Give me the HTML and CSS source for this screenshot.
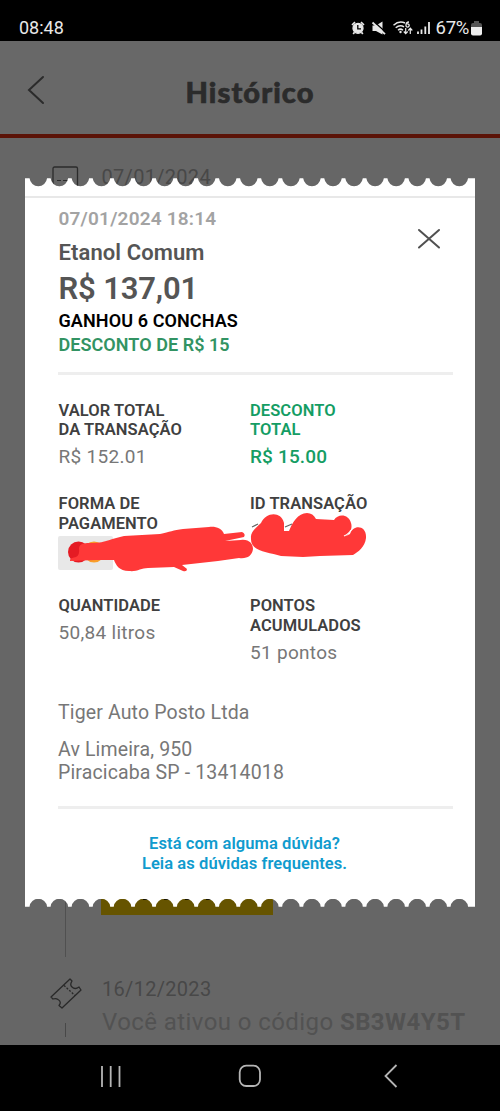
FILE: index.html
```html
<!DOCTYPE html>
<html lang="pt-BR">
<head>
<meta charset="utf-8">
<title>Histórico</title>
<link rel="stylesheet" href="styles.css">
</head>
<body>
<div class="phone">
  <header class="status">
    <span class="clock">08:48</span>
    <svg class="status-icons" width="82" height="18" viewBox="0 0 82 18" fill="none" stroke="#e8e8e8" stroke-width="1.3">
      <circle cx="7" cy="9.3" r="5" fill="#e8e8e8"/><path d="M1 6L4 3.2M10 3.2L13 6M3.5 13.2L2.2 15M10.5 13.2L11.8 15" stroke-width="1.7"/><path d="M6.8 6V9.8H10" stroke="#000"/>
      <path d="M21.5 6.500H25L31.500 2.500V15.500L25 12H21.5Z" fill="#e8e8e8" stroke="none"/><path d="M22.500 2.300L35.500 14" stroke="#000" stroke-width="1.400"/><path d="M21.500 3.5L34 15.200" stroke-width="1.800"/>
      <path d="M42.5 6.2Q48 1.3 54 4M44.7 8.8Q48.8 5.2 53 7.8M47 11.2Q49.5 9 52 11.2" stroke-width="1.5"/><circle cx="49.5" cy="13" r="1.2" fill="#e8e8e8" stroke="none"/>
      <path d="M58 3Q55 3 55 6.3A1.6 1.6 0 1 0 56 5"/><path d="M54.7 9V14.5M52.8 12.5L54.7 14.7L56.7 12.5M59.3 15V9.5M57.3 11.5L59.3 9.2L61.3 11.5" stroke-width="1.2"/>
      <path d="M67 12.5V15M70.5 10.5V15M74.3 7.5V15M78 3V15" stroke-width="1.8"/>
    </svg>
    <span class="percent">67%</span>
    <svg class="battery" width="11" height="15" viewBox="0 0 11 15"><path d="M3 0H8V2H9Q11 2 11 4V6H0V4Q0 2 2 2H3Z" fill="#555"/><path d="M0 6H11V12.5Q11 14.5 9 14.5H2Q0 14.5 0 12.5Z" fill="#eee"/></svg>
  </header>
  <div class="app-bar">
    <svg class="back" width="18" height="30" viewBox="0 0 18 30" fill="none" stroke="#2b2b2b" stroke-width="2" stroke-linecap="round"><path d="M16 2L2 15L16 28"/></svg>
    <h1>Histórico</h1>
  </div>
  <main class="timeline">
    <div class="entry first">
      <svg class="entry-icon" width="27" height="22" viewBox="0 0 27 22" fill="none" stroke="#2b2b2b" stroke-width="1.3"><rect x="1" y="1" width="24.5" height="20" rx="1.5"/><path d="M5 14.500H9M11 14.500H16" stroke-width="1.200"/></svg>
      <span class="entry-date">07/01/2024</span>
    </div>
    <div class="gold"><i></i><i></i><i></i><i></i></div>
    <div class="stem"></div>
    <div class="entry last">
      <svg class="entry-icon" width="32" height="32" viewBox="0 0 32 32" fill="none" stroke="#292929" stroke-width="1.3" stroke-linejoin="round"><path d="M1 19L20 1L22 3Q19.500 7 22 9Q25 12 29 9L31 12L12 30L9 27.500Q12 24 8 21.500Q6 20 3 21Z"/><path d="M14 7.500L25 17.500" stroke-dasharray="2 1.5"/></svg>
      <div>
        <div class="entry-date">16/12/2023</div>
        <div class="entry-text">Você ativou o código <b>SB3W4Y5T</b></div>
      </div>
    </div>
    <div class="stem-end"></div>
  </main>
  <nav class="nav-bar">
    <svg width="22" height="23" viewBox="0 0 22 23" stroke="#b5b5b5" stroke-width="1.8"><path d="M2 1V22M10.700 1V22M19.500 1V22"/></svg>
    <svg class="home" width="24" height="24" viewBox="0 0 24 24" fill="none" stroke="#b5b5b5" stroke-width="1.800"><rect x="1.700" y="1.700" width="20.300" height="20.300" rx="6.500"/></svg>
    <svg width="14" height="24" viewBox="0 0 14 24" fill="none" stroke="#b5b5b5" stroke-width="1.800"><path d="M12.500 1L1.500 12L12.500 23"/></svg>
  </nav>

  <section class="receipt">
    <svg class="edge" width="450" height="9" viewBox="0 0 450 9"><path id="scallop" fill="#fff" d="M0 9V.3H4.550a8.800 8.800 0 0 0 17.500 0h3.550a8.800 8.800 0 0 0 17.500 0h3.550a8.800 8.800 0 0 0 17.500 0h3.550a8.800 8.800 0 0 0 17.500 0h3.550a8.800 8.800 0 0 0 17.500 0h3.550a8.800 8.800 0 0 0 17.500 0h3.550a8.800 8.800 0 0 0 17.500 0h3.550a8.800 8.800 0 0 0 17.500 0h3.550a8.800 8.800 0 0 0 17.500 0h3.550a8.800 8.800 0 0 0 17.500 0h3.550a8.800 8.800 0 0 0 17.500 0h3.550a8.800 8.800 0 0 0 17.500 0h3.550a8.800 8.800 0 0 0 17.500 0h3.550a8.800 8.800 0 0 0 17.500 0h3.550a8.800 8.800 0 0 0 17.500 0h3.550a8.800 8.800 0 0 0 17.500 0h3.550a8.800 8.800 0 0 0 17.500 0h3.550a8.800 8.800 0 0 0 17.500 0h3.550a8.800 8.800 0 0 0 17.500 0h3.550a8.800 8.800 0 0 0 17.500 0h3.550a8.800 8.800 0 0 0 17.500 0H450V9Z"/></svg>
    <div class="receipt-body">
      <div class="top-rule"></div>
      <div class="summary">
        <div class="summary-text">
          <p class="when">07/01/2024 18:14</p>
          <p class="fuel">Etanol Comum</p>
          <p class="price">R$ 137,01</p>
          <p class="earned">GANHOU 6 CONCHAS</p>
          <p class="discount">DESCONTO DE R$ 15</p>
        </div>
        <svg class="close" width="24" height="22" viewBox="0 0 24 22" stroke="#505050" stroke-width="2" stroke-linecap="round"><path d="M2 2L22 19.500M22 2L2 19.500"/></svg>
      </div>
      <div class="details">
        <div class="cell"><h2>VALOR TOTAL<br>DA TRANSAÇÃO</h2><p>R$ 152.01</p></div>
        <div class="cell green"><h2>DESCONTO<br>TOTAL</h2><p>R$ 15.00</p></div>
        <div class="cell"><h2>FORMA DE<br>PAGAMENTO</h2><div class="card-logo"></div></div>
        <div class="cell"><h2>ID TRANSAÇÃO</h2></div>
        <div class="cell"><h2>QUANTIDADE</h2><p>50,84 litros</p></div>
        <div class="cell"><h2>PONTOS<br>ACUMULADOS</h2><p>51 pontos</p></div>
      </div>
      <div class="station">
        <p class="name">Tiger Auto Posto Ltda</p>
        <p class="street">Av Limeira, 950</p>
        <p class="city">Piracicaba SP - 13414018</p>
      </div>
      <div class="faq"><span class="faq-ask">Está com alguma dúvida?</span><br><span class="faq-link">Leia as dúvidas frequentes.</span></div>
    </div>
    <svg class="edge flip" width="450" height="9" viewBox="0 0 450 9"><use href="#scallop"/></svg>
    <svg class="scribble" width="330" height="70" viewBox="50 510 330 70">
      <circle cx="78.500" cy="552" r="10.500" fill="#e51b24"/><circle cx="94" cy="552" r="10.500" fill="#f99e2a"/>
      <path d="M252 527L258 524M285 527L292 524" stroke="#666" stroke-width="1.300"/>
      <path fill="#ff3838" d="M79 548C80 542 88 543 93 543C105 543 113 538 124 536L160 534C170 532 173 530 183 529L209 527C215 526 222 528 224 534L242 532Q246 534 244 537L225 541L241 540C249 539 253 544 253 549C252 556 247 559 239 558L218 561L182 565L187 569Q187 572 183 571L174 567L148 568C141 568 137 572 129 571C119 571 116 565 114 560L96 560L70 561Q69 558 76 557Q80 555 79 548Z"/>
      <path fill="#ff3838" d="M251 538C250 532 257 527 261 523C266 512 281 511 284 523L284 531L289 531C292 523 298 513 307 513Q313 513 316 519L334 520C338 513 349 514 351 523C353 529 349 535 344 537L350 534C353 524 367 525 366 538C365 547 358 552 353 555L320 556L303 557L281 556C268 552 250 552 251 538Z"/>
      <path d="M344 536Q349 534 351 530" fill="none" stroke="#fff" stroke-width="1.200"/>
    </svg>
  </section>
</div>
</body>
</html>
```
FILE: styles.css
```css
* { box-sizing: border-box; }
body { margin: 0; font-family: Roboto, sans-serif; background: #666; }
h1, h2, p { margin: 0; }
svg { display: block; flex: none; }
.phone { position: relative; width: 500px; height: 1111px; display: flex; flex-direction: column; overflow: hidden; background: #666; }

.status { height: 41px; flex: none; display: flex; align-items: center; padding: 15px 18px 0 19px; background: #000; color: #e8e8e8; font-size: 18px; }
.clock { margin-right: auto; line-height: 28px; }
.percent { margin: 0 2px 0 3px; font-size: 18.5px; letter-spacing: -.3px; }

.app-bar { height: 97px; flex: none; display: flex; align-items: center; padding-left: 27px; background: #686868; border-bottom: 4px solid #5b1307; margin-bottom: 1px; }
.app-bar h1 { margin: 7px 0 0 140.5px; font: 900 29px Lato, sans-serif; color: #2b2b2b; letter-spacing: 1.1px; -webkit-text-stroke: .7px #2b2b2b; }
.back { margin-top: 4px; }

.timeline { flex: 1; display: flex; flex-direction: column; }
.entry { display: flex; font-size: 20px; color: #484848; }
.entry-date { line-height: 24px; letter-spacing: .3px; }
.first { padding: 26px 0 0 52px; gap: 22.5px; height: 60px; }
.first .entry-icon { margin-top: 1px; }
.gold { width: 172px; height: 25px; margin: 691px 0 0 101px; padding: 8px 0 0 42px; display: flex; gap: 16px; background: #665400; flex: none; }
.gold i { width: 5px; height: 2px; background: #171300; }
.stem { width: 1px; height: 58px; margin: -16px 0 0 65px; background: #505050; flex: none; }
.last { padding: 20px 0 0 50px; gap: 20px; }
.last .entry-icon { margin-top: 1px; }
.entry-text { margin-top: 7px; font-size: 24px; line-height: 29px; letter-spacing: .42px; white-space: nowrap; color: #525252; }
.stem-end { width: 1px; height: 14px; margin: -14px 0 0 65px; background: #484848; }

.nav-bar { height: 66px; flex: none; display: flex; justify-content: space-between; align-items: center; padding: 0 102px 4px 99.5px; background: #000; }
.home { margin-right: 5px; }

.receipt { position: absolute; left: 25px; top: 178px; width: 450px; height: 729px; display: flex; flex-direction: column; }
.edge { height: 9px; }
.flip { transform: scaleY(-1); }
.receipt-body { flex: 1; background: #fff; padding-top: 9px; margin: -.5px 0; }
.top-rule { height: 2px; background: #e8e8e8; }
.summary { display: flex; justify-content: space-between; margin: 0 22px 0 33px; height: 177.5px; border-bottom: 3px solid #eee; padding-top: 8px; }
.summary-text { padding-left: .5px; }
.close { margin: 22px 12px 0 0; }
.summary p { white-space: nowrap; }
.when { font-weight: 600; font-size: 19px; line-height: 26px; color: #a3a3a3; letter-spacing: .2px; }
.fuel { margin-top: 6px; font-weight: 600; font-size: 22px; line-height: 30px; color: #555; letter-spacing: .1px; }
.price { font-weight: 600; font-size: 31px; line-height: 41px; color: #555; letter-spacing: -.15px; }
.earned { font-weight: 600; font-size: 18px; line-height: 24px; color: #000; letter-spacing: .1px; }
.discount { font-weight: 600; font-size: 18px; line-height: 24px; color: #329363; letter-spacing: .05px; }

.details { display: grid; grid-template-columns: 191.5px 190px; grid-template-rows: 93.5px 102px 105.5px; margin: 25.5px 0 0 33.5px; }
.cell h2 { font-weight: 600; font-size: 16.5px; line-height: 19.5px; color: #404040; white-space: nowrap; letter-spacing: .07px; }
.cell p { margin-top: 4.5px; font-size: 19px; line-height: 26px; font-weight: 450; color: #777; letter-spacing: .3px; }
.cell.green h2, .cell.green p { color: #149d64; }
.cell.green p { font-weight: 550; letter-spacing: .15px; }
.card-logo { width: 55px; height: 34px; margin: 2.5px 0 0 -.5px; background: #e8e8e8; border-radius: 2px; }

.station { margin: 0 22px 0 33px; height: 108px; border-bottom: 3px solid #eee; font-size: 19.5px; line-height: 23px; font-weight: 450; color: #777; letter-spacing: .14px; }
.name { margin-top: -.5px; }
.street { margin-top: 14px; }
.faq { padding: 25px 11px 0 0; text-align: center; font-weight: 600; font-size: 16.5px; line-height: 19.5px; color: #109bce; letter-spacing: .08px; }
.scribble { position: absolute; left: 25px; top: 332px; }
```
